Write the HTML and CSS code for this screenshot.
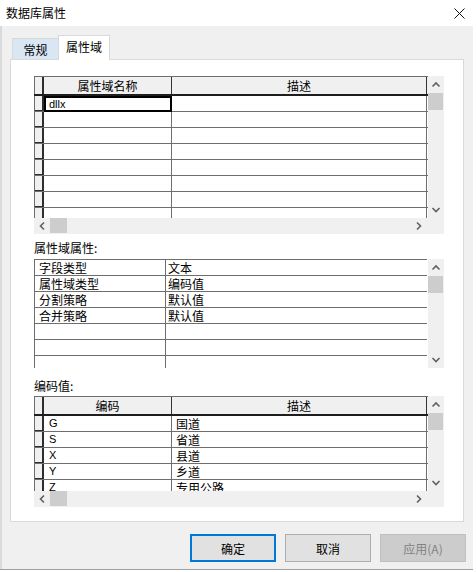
FILE: index.html
```html
<!DOCTYPE html>
<html lang="zh-CN">
<head>
<meta charset="utf-8">
<title>数据库属性</title>
<link rel="stylesheet" href="styles.css">
</head>
<body>
<div class="dialog">
  <div class="titlebar">
    <span class="title">数据库属性</span>
    <svg class="close" width="11" height="11" viewBox="0 0 11 11"><path d="M0.5 0.5 L10.5 10.5 M10.5 0.5 L0.5 10.5" stroke="#111" stroke-width="1" fill="none"/></svg>
  </div>
  <div class="content">
    <div class="tabs">
      <div class="tab tab-inactive">常规</div>
      <div class="tab tab-active">属性域</div>
    </div>
    <div class="panel">
      <div class="gridbox g1">
        <div class="gridtop">
          <div class="grid">
            <div class="row row-head"><div class="sel"></div><div class="cell c-name">属性域名称</div><div class="cell c-desc">描述</div></div>
            <div class="row"><div class="sel"></div><div class="cell c-name cell-current latin">dllx</div><div class="cell c-desc"></div></div>
            <div class="row"><div class="sel"></div><div class="cell c-name"></div><div class="cell c-desc"></div></div>
            <div class="row"><div class="sel"></div><div class="cell c-name"></div><div class="cell c-desc"></div></div>
            <div class="row"><div class="sel"></div><div class="cell c-name"></div><div class="cell c-desc"></div></div>
            <div class="row"><div class="sel"></div><div class="cell c-name"></div><div class="cell c-desc"></div></div>
            <div class="row"><div class="sel"></div><div class="cell c-name"></div><div class="cell c-desc"></div></div>
            <div class="row"><div class="sel"></div><div class="cell c-name"></div><div class="cell c-desc"></div></div>
            <div class="row"><div class="sel"></div><div class="cell c-name"></div><div class="cell c-desc"></div></div>
          </div>
          <div class="vscroll">
            <svg class="sbtn" viewBox="0 0 16 16"><polyline points="4.5,10.5 8,7 11.5,10.5" fill="none" stroke="#606060" stroke-width="1.6"/></svg>
            <div class="vthumb"></div>
            <div class="vspace"></div>
            <svg class="sbtn" viewBox="0 0 16 16"><polyline points="4.5,6 8,9.5 11.5,6" fill="none" stroke="#606060" stroke-width="1.6"/></svg>
          </div>
        </div>
        <div class="hscroll">
          <svg class="sbtn" viewBox="0 0 16 16"><polyline points="10,4.5 6.5,8 10,11.5" fill="none" stroke="#606060" stroke-width="1.6"/></svg>
          <div class="hthumb"></div>
          <div class="hspace"></div>
          <svg class="sbtn" viewBox="0 0 16 16"><polyline points="5,4.5 8.5,8 5,11.5" fill="none" stroke="#606060" stroke-width="1.6"/></svg>
          <div class="corner"></div>
        </div>
      </div>

      <div class="section-label lbl1">属性域属性:</div>

      <div class="gridbox g2">
        <div class="gridtop">
          <div class="grid grid-kv">
            <div class="row"><div class="cell k">字段类型</div><div class="cell v">文本</div></div>
            <div class="row"><div class="cell k">属性域类型</div><div class="cell v">编码值</div></div>
            <div class="row"><div class="cell k">分割策略</div><div class="cell v">默认值</div></div>
            <div class="row"><div class="cell k">合并策略</div><div class="cell v">默认值</div></div>
            <div class="row"><div class="cell k"></div><div class="cell v"></div></div>
            <div class="row"><div class="cell k"></div><div class="cell v"></div></div>
            <div class="row"><div class="cell k"></div><div class="cell v"></div></div>
          </div>
          <div class="vscroll">
            <svg class="sbtn" viewBox="0 0 16 16"><polyline points="4.5,10.5 8,7 11.5,10.5" fill="none" stroke="#606060" stroke-width="1.6"/></svg>
            <div class="vthumb"></div>
            <div class="vspace"></div>
            <svg class="sbtn" viewBox="0 0 16 16"><polyline points="4.5,6 8,9.5 11.5,6" fill="none" stroke="#606060" stroke-width="1.6"/></svg>
          </div>
        </div>
      </div>

      <div class="section-label lbl2">编码值:</div>

      <div class="gridbox g3">
        <div class="gridtop">
          <div class="grid">
            <div class="row row-head"><div class="sel"></div><div class="cell c-name">编码</div><div class="cell c-desc">描述</div></div>
            <div class="row"><div class="sel"></div><div class="cell c-name latin">G</div><div class="cell c-desc">国道</div></div>
            <div class="row"><div class="sel"></div><div class="cell c-name latin">S</div><div class="cell c-desc">省道</div></div>
            <div class="row"><div class="sel"></div><div class="cell c-name latin">X</div><div class="cell c-desc">县道</div></div>
            <div class="row"><div class="sel"></div><div class="cell c-name latin">Y</div><div class="cell c-desc">乡道</div></div>
            <div class="row"><div class="sel"></div><div class="cell c-name latin">Z</div><div class="cell c-desc">专用公路</div></div>
          </div>
          <div class="vscroll">
            <svg class="sbtn" viewBox="0 0 16 16"><polyline points="4.5,10.5 8,7 11.5,10.5" fill="none" stroke="#606060" stroke-width="1.6"/></svg>
            <div class="vthumb"></div>
            <div class="vspace"></div>
            <svg class="sbtn" viewBox="0 0 16 16"><polyline points="4.5,6 8,9.5 11.5,6" fill="none" stroke="#606060" stroke-width="1.6"/></svg>
          </div>
        </div>
        <div class="hscroll">
          <svg class="sbtn" viewBox="0 0 16 16"><polyline points="10,4.5 6.5,8 10,11.5" fill="none" stroke="#606060" stroke-width="1.6"/></svg>
          <div class="hthumb"></div>
          <div class="hspace"></div>
          <svg class="sbtn" viewBox="0 0 16 16"><polyline points="5,4.5 8.5,8 5,11.5" fill="none" stroke="#606060" stroke-width="1.6"/></svg>
          <div class="corner"></div>
        </div>
      </div>
    </div>
    <div class="buttons">
      <button class="btn btn-default">确定</button>
      <button class="btn">取消</button>
      <button class="btn btn-disabled">应用(A)</button>
    </div>
  </div>
</div>
</body>
</html>
```

FILE: styles.css
```css
html, body {
  margin: 0;
  padding: 0;
}
body {
  background: #ffffff;
  font-family: "Noto Sans CJK SC", "Liberation Sans", sans-serif;
  color: #000;
}
.dialog {
  width: 473px;
}
.titlebar {
  height: 26px;
  background: #ffffff;
  display: flex;
  align-items: center;
  justify-content: space-between;
  padding: 0 8px 0 6px;
  box-sizing: border-box;
}
.title {
  font-size: 12px;
  line-height: 14px;
}
.close {
  display: block;
}
.content {
  height: 544px;
  box-sizing: border-box;
  border-bottom: 1px solid #a0a0a0;
  background: #f0f0f0;
  box-shadow: inset 2px 0 0 #dadada;
  display: flex;
  flex-direction: column;
}
.tabs {
  display: flex;
  align-items: flex-end;
  height: 25px;
  margin-top: 9px;
  padding-left: 12px;
}
.tab {
  font-size: 12px;
  line-height: 14px;
  display: flex;
  align-items: center;
  justify-content: center;
  box-sizing: border-box;
  border: 1px solid #d9d9d9;
  border-bottom: none;
}
.tab-inactive {
  width: 46px;
  height: 22px;
  background: #d9e7f5;
  border-right: none;
}
.tab-active {
  width: 52px;
  height: 25px;
  background: #ffffff;
  position: relative;
  z-index: 1;
  padding-bottom: 2px;
}
.panel {
  margin: -1px 0 0 10px;
  width: 454px;
  height: 463px;
  box-sizing: border-box;
  border: 1px solid #d9d9d9;
  background: #ffffff;
  padding: 16px 0 0 23px;
}
.gridbox {
  width: 410px;
}
.gridtop {
  display: flex;
}
.grid {
  width: 394px;
  overflow: hidden;
  background: #ffffff;
}
.g1 .grid, .g1 .vscroll { height: 142px; }
.g2 .grid, .g2 .vscroll { height: 109px; }
.g3 .grid, .g3 .vscroll { height: 95px; }
.grid-kv {
  box-sizing: border-box;
  border-top: 1px solid #6e6e6e;
  width: 393px;
  margin-right: 1px;
}
.vscroll {
  width: 16px;
  background: #f0f0f0;
  display: flex;
  flex-direction: column;
}
.sbtn {
  display: block;
  width: 16px;
  height: 16px;
  flex: none;
}
.vthumb {
  height: 17px;
  margin: 1px 1px 0 0;
  background: #cdcdcd;
  flex: none;
}
.vspace, .hspace {
  flex: 1;
}
.hscroll {
  display: flex;
  height: 16px;
  background: #f0f0f0;
}
.hthumb {
  width: 17px;
  margin-bottom: 1px;
  background: #cdcdcd;
  flex: none;
}
.corner {
  width: 16px;
  flex: none;
}
.section-label {
  font-size: 12px;
  line-height: 14px;
}
.lbl1 { padding: 7px 0 4px; }
.lbl2 { padding: 11px 0 3px; }

.row {
  display: flex;
  height: 16px;
  box-sizing: border-box;
  border-bottom: 1px solid #6e6e6e;
  font-size: 12px;
  line-height: 15px;
}
.row-head {
  height: 20px;
  border-top: 1px solid #6e6e6e;
  border-bottom: 2px solid #1e1e1e;
  background: #f0f0f0;
  line-height: 17px;
}
.sel {
  width: 10px;
  flex: none;
  box-sizing: border-box;
  border-left: 1px solid #6e6e6e;
  background: #f0f0f0;
  box-shadow: inset -2px -1px 0 #2e2e2e;
}
.row-head .sel {
  box-shadow: inset -2px 0 0 #2e2e2e;
}
.cell {
  flex: none;
  box-sizing: border-box;
  border-right: 1px solid #6e6e6e;
  white-space: nowrap;
  overflow: hidden;
}
.c-name {
  width: 128px;
  padding-left: 5px;
}
.c-desc {
  width: 255px;
  padding-left: 4px;
}
.row-head .cell {
  text-align: center;
  padding-left: 0;
  border-right-color: #333;
}
.cell-current {
  border: 2px solid #000;
  margin-bottom: -1px;
  padding-left: 3px;
  line-height: 12px;
}
.latin {
  font-family: "Liberation Sans", sans-serif;
  font-size: 11px;
}
.k {
  width: 132px;
  border-left: 1px solid #6e6e6e;
  padding-left: 4px;
}
.v {
  flex: 1;
  border-right: none;
  padding-left: 2px;
}
.buttons {
  display: flex;
  justify-content: flex-end;
  gap: 9px;
  padding-right: 7px;
  margin-top: 12px;
}
.btn {
  width: 86px;
  height: 28px;
  box-sizing: border-box;
  font-family: "Noto Sans CJK SC", "Liberation Sans", sans-serif;
  font-size: 12px;
  background: #e1e1e1;
  border: 1px solid #adadad;
  color: #000;
  padding: 0;
  margin: 0;
}
.btn-default {
  border: 2px solid #0078d7;
}
.btn-disabled {
  background: #cccccc;
  border-color: #bfbfbf;
  color: #838383;
}
```
